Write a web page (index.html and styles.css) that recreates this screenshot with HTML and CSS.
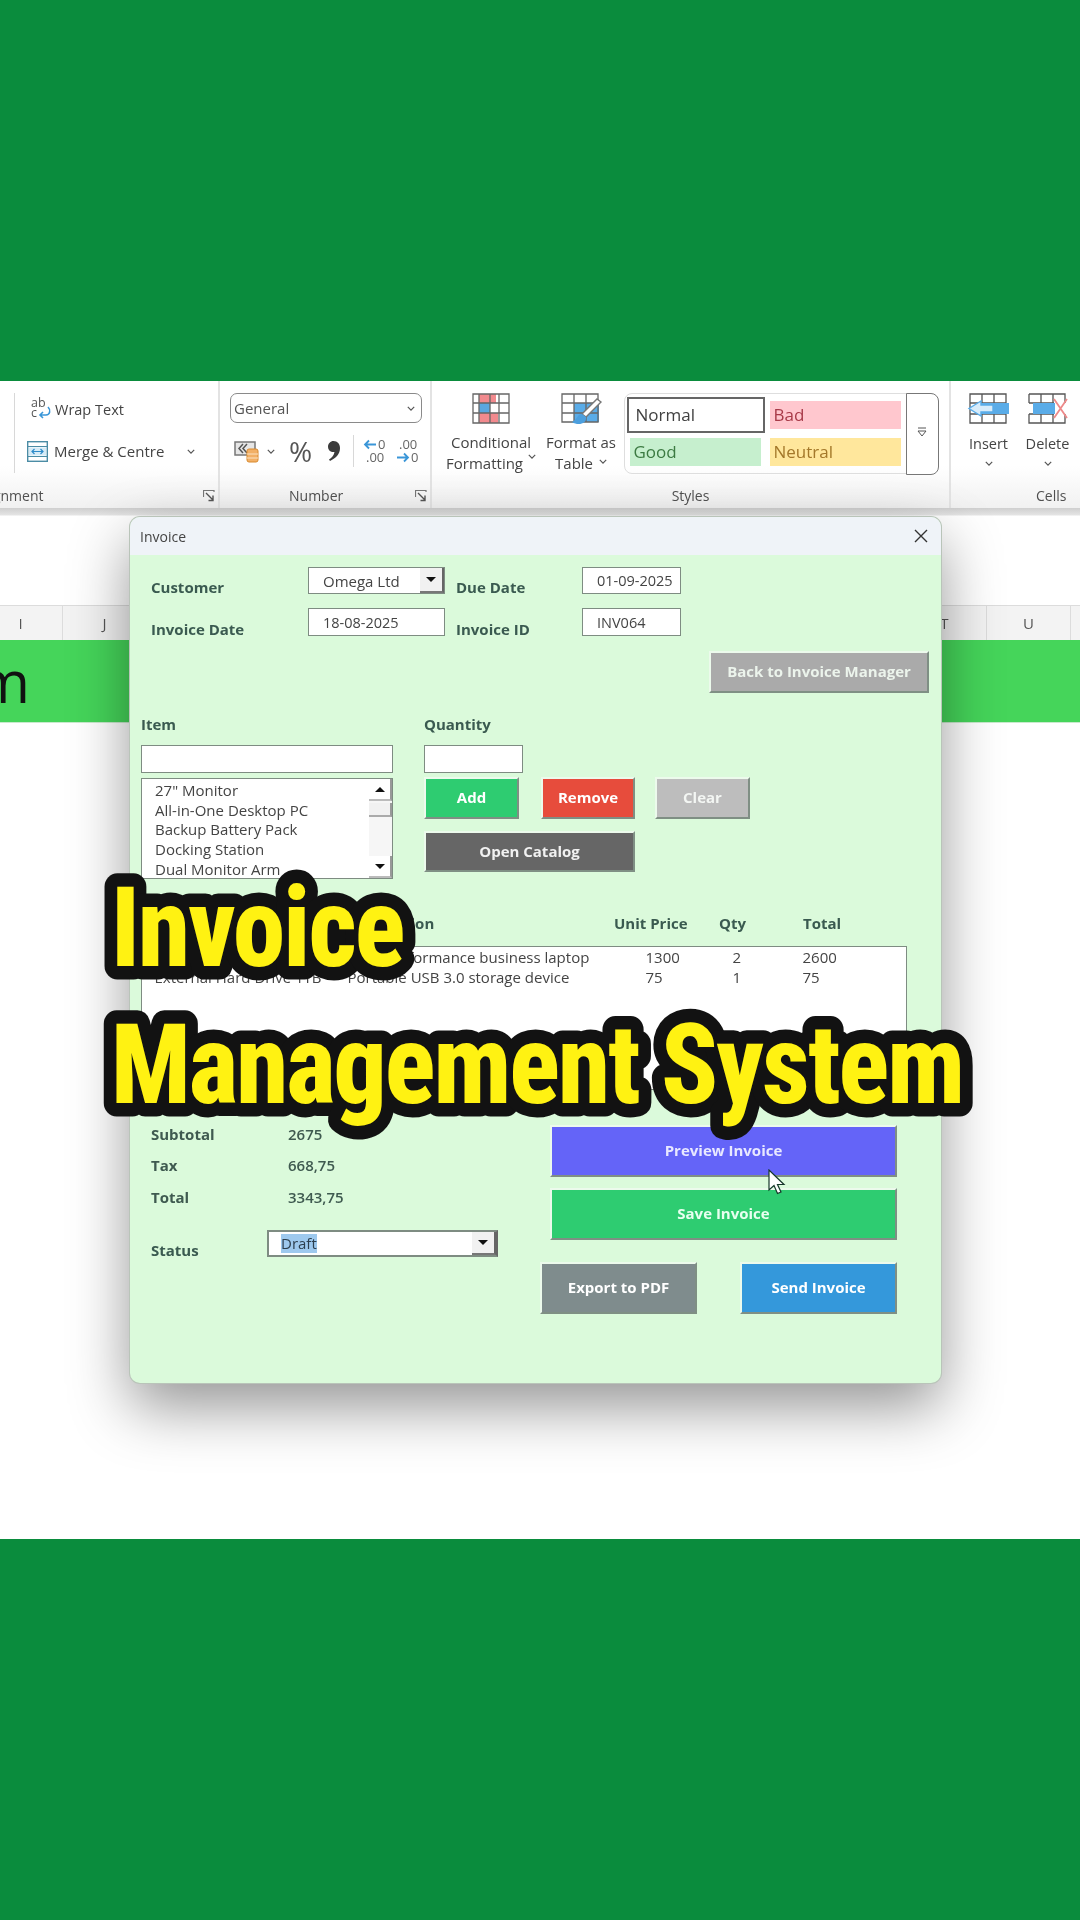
FILE: index.html
```html
<!DOCTYPE html>
<html lang="en">
<head>
<meta charset="utf-8">
<title>Invoice Management System</title>
<link rel="stylesheet" href="styles.css">
</head>
<body>
<svg class="defs" width="0" height="0" aria-hidden="true">
  <symbol id="chev" viewBox="0 0 10 6"><path d="M1 1l4 4 4-4" fill="none" stroke="currentColor" stroke-width="1.5"/></symbol>
  <symbol id="launch" viewBox="0 0 12 12"><path d="M.5 7V.5H11V2M.5.5" fill="none" stroke="#777" stroke-width="1.2"/><path d="M3 3l7 7M10 5.5V10.500H5.500" fill="none" stroke="#555" stroke-width="1.4"/></symbol>
</svg>
<div class="band"></div>
<main class="screen">
  <div class="shot">
    <section class="ribbon">
      <div class="group g-align">
        <div class="g-body align-body">
          <div class="tool-row">
            <svg class="ic-wrap" width="22" height="24" viewBox="0 0 22 24"><text x="1" y="10" class="ic-txt">ab</text><text x="1" y="20" class="ic-txt">c</text><path d="M18 10c3 3 2 8-2 8h-6M13 15l-3 3 3 3" fill="none" stroke="#3a96d8" stroke-width="1.6"/></svg>
            <span class="wrap-text">Wrap Text</span>
          </div>
          <div class="tool-row merge">
            <svg width="21" height="21" viewBox="0 0 21 21"><rect x=".7" y=".7" width="19.600" height="19.600" fill="#fff" stroke="#4b8ca5" stroke-width="1.400"/><path d="M1 5.500h19M1 15.500h19" stroke="#4b8ca5"/><rect x="2" y="6.500" width="17" height="8" fill="#d5ebf7"/><path d="M5 10.500h11M7.500 8l-2.500 2.500L7.500 13M13.500 8l2.500 2.500L13.500 13" fill="none" stroke="#2e8bc9" stroke-width="1.200"/></svg>
            <span>Merge &amp; Centre</span>
            <svg class="chev merge-chev"><use href="#chev"/></svg>
          </div>
        </div>
        <div class="g-label label-cut"><span>Alignment</span><svg class="launch"><use href="#launch"/></svg></div>
      </div>

      <div class="group g-number">
        <div class="g-body num-body">
          <div class="num-combo"><span>General</span><svg class="chev"><use href="#chev"/></svg></div>
          <div class="num-tools">
            <svg class="ic-acc" width="25" height="24" viewBox="0 0 25 24"><rect x="1" y="3" width="20" height="13" fill="#e6e6e6" stroke="#777" stroke-width="1.500"/><path d="M9 5l-4 4.500L9 14M13 5L9 9.500 13 14" fill="none" stroke="#555" stroke-width="1.500"/><rect x="13" y="10" width="11" height="13" rx="2" fill="#f2b066" stroke="#d98a2f"/><path d="M13 15h11M13 19h11" stroke="#fbe3c4"/></svg>
            <svg class="chev acc-chev"><use href="#chev"/></svg>
            <span class="pct">%</span>
            <svg class="comma" width="14" height="24" viewBox="0 0 14 24"><path d="M6.500 2C10.500 2 13 5 13 9c0 6-4 10-10 13l-1-1.500c3-2 5-4.500 5.500-7.500C4 13.500 1 11.500 1 7.500 1 4.500 3.500 2 6.500 2z" fill="#3c3c3c"/></svg>
            <i class="tool-sep"></i>
            <svg class="dec" width="23" height="28" viewBox="0 0 23 28"><path d="M13 7.500H2M6 3.500l-4 4 4 4" fill="none" stroke="#3a96d8" stroke-width="1.800"/><text x="15" y="12" class="dec-txt">0</text><text x="3" y="25" class="dec-txt">.00</text></svg>
            <svg class="dec" width="23" height="28" viewBox="0 0 23 28"><text x="3" y="12" class="dec-txt">.00</text><path d="M1 20.500h11M8 16.500l4 4-4 4" fill="none" stroke="#3a96d8" stroke-width="1.800"/><text x="15" y="25" class="dec-txt">0</text></svg>
          </div>
        </div>
        <div class="g-label label-center"><span>Number</span><svg class="launch"><use href="#launch"/></svg></div>
      </div>

      <div class="group g-styles">
        <div class="g-body styles-body">
          <div class="big-tool cf">
            <svg width="38" height="31" viewBox="0 0 38 31"><rect x="1" y="1" width="36" height="29" fill="#fff"/><rect x="7" y="1" width="17" height="9" fill="#f28a8e"/><rect x="7" y="10" width="11" height="10" fill="#5aa7e0"/><rect x="7" y="20" width="19" height="10" fill="#f28a8e"/><path d="M1 1h36v29H1zM1 10h36M1 20h36M7 1v29M18 1v29M27 1v29" fill="none" stroke="#666" stroke-width="1.300"/></svg>
            <span>Conditional</span>
            <span>Formatting <svg class="chev"><use href="#chev"/></svg></span>
          </div>
          <div class="big-tool ft">
            <svg width="42" height="36" viewBox="0 0 42 36"><rect x="13" y="10" width="25" height="19" fill="#5aace8"/><path d="M1 1h36v28H1zM1 10h36M1 20h36M13 1v28M25 1v28" fill="none" stroke="#666" stroke-width="1.300"/><path d="M40 9L25 24l-4-3L36 6z" fill="#fff" stroke="#777" stroke-width="1.400"/><path d="M21 21c-5 0-4 5-10 8 6 4 15 2 14-5z" fill="#4c9fde"/></svg>
            <span>Format as</span>
            <span>Table <svg class="chev"><use href="#chev"/></svg></span>
          </div>
          <div class="gallery">
            <div class="swatches">
              <div class="sw sw-normal">Normal</div>
              <div class="sw sw-bad">Bad</div>
              <div class="sw sw-good">Good</div>
              <div class="sw sw-neutral">Neutral</div>
            </div>
            <div class="gal-btn"><svg width="10" height="10" viewBox="0 0 10 10"><path d="M1 1h8M1 4h8l-4 5z" fill="#fff" stroke="#555"/></svg></div>
          </div>
        </div>
        <div class="g-label styles-label"><span>Styles</span></div>
      </div>

      <div class="group g-cells">
        <div class="g-body cells-body">
          <div class="cell-tool">
            <svg width="43" height="31" viewBox="0 0 43 31"><path d="M3 1h36v29H3zM3 10h36M3 21h36M15 1v29M27 1v29" fill="none" stroke="#555" stroke-width="1.300"/><rect x="13" y="10" width="29" height="11" fill="#5aace8"/><path d="M14 8L2 15.500 14 23v-4h12v-7H14z" fill="#d8ecfa" stroke="#5aace8" stroke-width="1.400"/></svg>
            <span>Insert</span>
            <svg class="chev"><use href="#chev"/></svg>
          </div>
          <div class="cell-tool">
            <svg width="40" height="31" viewBox="0 0 40 31"><path d="M1 1h36v9M1 1v9M1 21v9h36v-9M1 10h25M1 21h25M13 1v29M25 1v29" fill="none" stroke="#555" stroke-width="1.300"/><rect x="5" y="10" width="22" height="11" fill="#5aace8"/><path d="M26 6l13 19M39 6L26 25" stroke="#ee8a8a" stroke-width="1.800"/></svg>
            <span>Delete</span>
            <svg class="chev"><use href="#chev"/></svg>
          </div>
        </div>
        <div class="g-label cells-label"><span>Cells</span></div>
      </div>
    </section>

    <section class="sheet">
      <div class="formula-gap"></div>
      <div class="col-heads">
        <span>I</span><span>J</span><span>K</span><span>L</span><span>M</span><span>N</span><span>O</span><span>P</span><span>Q</span><span>R</span><span>S</span><span>T</span><span>U</span><span>V</span>
      </div>
      <div class="title-band"><span>m</span></div>
    </section>

    <section class="dialog">
      <header class="dlg-title">
        <span>Invoice</span>
        <svg width="14" height="14" viewBox="0 0 14 14"><path d="M1 1l12 12M13 1L1 13" stroke="#333" stroke-width="1.400"/></svg>
      </header>
      <div class="dlg-body">
        <div class="head-grid">
          <label class="lbl lbl-down">Customer</label>
          <div class="field combo"><span>Omega Ltd</span><b class="drop"><i></i></b></div>
          <label class="lbl lbl-down due">Due Date</label>
          <div class="field">01-09-2025</div>
          <label class="lbl lbl-down">Invoice Date</label>
          <div class="field">18-08-2025</div>
          <label class="lbl lbl-down due">Invoice ID</label>
          <div class="field">INV064</div>
        </div>

        <div class="back-row"><button class="btn btn-back">Back to Invoice Manager</button></div>

        <div class="entry">
          <div class="entry-left">
            <label class="lbl lbl-top">Item</label>
            <div class="field item-input"></div>
            <div class="listbox">
              <ul>
                <li>27" Monitor</li>
                <li>All-in-One Desktop PC</li>
                <li>Backup Battery Pack</li>
                <li>Docking Station</li>
                <li>Dual Monitor Arm</li>
              </ul>
              <div class="scroll">
                <b class="sb-btn"><i class="up"></i></b>
                <b class="sb-thumb"></b>
                <span class="sb-track"></span>
                <b class="sb-btn"><i></i></b>
              </div>
            </div>
          </div>
          <div class="entry-right">
            <label class="lbl lbl-top">Quantity</label>
            <div class="field qty-input"></div>
            <div class="btn-row">
              <button class="btn btn-add">Add</button>
              <button class="btn btn-remove">Remove</button>
              <button class="btn btn-clear">Clear</button>
            </div>
            <button class="btn btn-catalog">Open Catalog</button>
          </div>
        </div>

        <div class="table-head">
          <span>Item</span><span>Description</span><span>Unit Price</span><span>Qty</span><span>Total</span>
        </div>
        <div class="table-list">
          <div class="t-row"><span>Business Laptop</span><span>High-performance business laptop</span><span>1300</span><span>2</span><span>2600</span></div>
          <div class="t-row"><span>External Hard Drive 1TB</span><span>Portable USB 3.0 storage device</span><span>75</span><span>1</span><span>75</span></div>
        </div>

        <div class="bottom">
          <div class="summary">
            <div class="sum-grid">
              <span>Subtotal</span><span>2675</span>
              <span>Tax</span><span>668,75</span>
              <span>Total</span><span>3343,75</span>
            </div>
            <div class="status-row">
              <label class="lbl status-lbl">Status</label>
              <div class="field combo status-combo"><span class="sel">Draft</span><b class="drop"><i></i></b></div>
            </div>
          </div>
          <div class="actions">
            <button class="btn btn-wide btn-preview">Preview Invoice</button>
            <button class="btn btn-wide btn-save">Save Invoice</button>
            <div class="act-row">
              <button class="btn btn-half btn-export">Export to PDF</button>
              <button class="btn btn-half btn-send">Send Invoice</button>
            </div>
          </div>
        </div>
      </div>
    </section>

    <svg class="cursor" width="18" height="27" viewBox="0 0 18 27"><path d="M1 1v20l5-4.500 3.500 8 3.500-1.500-3.500-7.500H16z" fill="#fff" stroke="#16382a" stroke-width="1.200"/></svg>
  </div>

  <svg class="caption" width="1080" height="340" viewBox="0 0 1080 340" role="img">
    <g transform="translate(111 0) scale(.947 1)">
      <text x="0" y="125">Invoice</text>
      <text x="0" y="262">Management System</text>
    </g>
  </svg>
</main>
<div class="band band-bottom"></div>
</body>
</html>
```
FILE: styles.css
```css
* { box-sizing: border-box; }
html, body { margin: 0; padding: 0; }
body {
  width: 1080px;
  height: 1920px;
  overflow: hidden;
  display: flex;
  flex-direction: column;
  background: #0a8c3d;
  font-family: "Open Sans", "Noto Sans", sans-serif;
}
.defs { position: absolute; }
.band { height: 381px; background: #0a8c3d; flex: none; }
.band-bottom { height: 381px; }
.screen { position: relative; height: 1158px; flex: none; background: #fff; overflow: hidden; }
.shot { position: relative; height: 100%; filter: blur(.45px); overflow: hidden; }

/* ribbon */
.ribbon {
  height: 127px;
  display: flex;
  color: #444;
  font-size: 15px;
  background: linear-gradient(#fff 0, #fff 85px, #f1f1f1 127px);
}
.group { display: flex; flex-direction: column; padding-top: 12px; flex: none; position: relative; }
.g-body { height: 93px; flex: none; }
.g-label { height: 20px; line-height: 20px; font-size: 14px; display: flex; align-items: center; color: #505050; white-space: nowrap; }
.chev { width: 8px; height: 5px; color: #555; flex: none; }
.launch { width: 12px; height: 12px; flex: none; }
.ic-txt { font: 12.5px "Open Sans", sans-serif; fill: #555; }

.g-align { width: 220px; border-right: 2px solid #e3e3e3; }
.align-body { margin-left: 14px; padding-left: 12px; border-left: 1px solid #d8d8d8; height: 80px; display: flex; flex-direction: column; gap: 19px; }
.tool-row { display: flex; align-items: center; gap: 3px; height: 28px; white-space: nowrap; margin-top: 2px; }
.wrap-text { font-size: 14.5px; }
.ic-wrap { margin-left: 3px; }
.merge { gap: 6px; margin-top: -5px; }
.merge-chev { margin-left: 17px; }
.label-cut { margin: 13px 3px 0 -23px; justify-content: space-between; }

.g-number { width: 212px; border-right: 2px solid #e3e3e3; }
.num-body { padding: 0 0 0 10px; }
.num-combo {
  width: 192px; height: 30px; border: 1.5px solid #8a8a8a; border-radius: 7px; padding: 0 6px 0 3px;
  display: flex; align-items: center; justify-content: space-between; font-size: 15px; color: #555; background: #fff;
}
.num-tools { display: flex; align-items: center; margin-top: 10px; height: 36px; padding-left: 4px; }
.acc-chev { margin-left: 8px; }
.pct { font-size: 28px; margin-left: 14px; color: #555; line-height: 1; font-weight: 400; }
.comma { margin-left: 15px; }
.tool-sep { width: 1px; height: 32px; background: #d8d8d8; margin: 0 9px 0 12px; }
.dec + .dec { margin-left: 10px; }
.dec-txt { font: 13px "Open Sans", sans-serif; fill: #666; }
.label-center { padding: 0 3px 0 69px; justify-content: space-between; }

.g-styles { width: 519px; border-right: 2px solid #e3e3e3; }
.styles-body { display: flex; }
.big-tool { display: flex; flex-direction: column; align-items: center; line-height: 21px; font-size: 15px; white-space: nowrap; flex: none; }
.big-tool svg:first-child { margin-bottom: 8px; flex: none; }
.big-tool .chev { margin-left: 1px; vertical-align: 2px; }
.cf { width: 118px; }
.ft { width: 74px; margin-left: -6px; }
.ft svg:first-child { margin-bottom: 3px; margin-left: 2px; }
.gallery { width: 314px; height: 81px; margin-left: 6px; border: 1.5px solid #dedede; border-radius: 8px; display: flex; flex: none; }
.swatches { width: 282px; display: grid; grid-template-columns: 138px 131px; grid-template-rows: 36px 28px; column-gap: 5px; row-gap: 5px; padding: 2.500px 0 0 1.500px; font-size: 17px; }
.sw { display: flex; align-items: center; padding-left: 4px; }
.sw-normal { border: 2px solid #666; padding-left: 7px; color: #404040; background: #fff; }
.sw-bad { background: #ffc7ce; color: #a83a48; height: 28px; align-self: center; }
.sw-good { background: #c6efce; color: #3c7a42; width: 131px; margin-left: 3px; }
.sw-neutral { background: #ffe79c; color: #a4782a; }
.gal-btn { flex: 1; border: 1.5px solid #777; border-radius: 0 8px 8px 0; margin: -1.500px; display: flex; align-items: center; justify-content: center; padding-bottom: 4px; background: #fff; }
.styles-label { justify-content: center; }

.g-cells { flex: 1; }
.cells-body { display: flex; padding-left: 8px; }
.cell-tool { width: 59px; display: flex; flex-direction: column; align-items: center; font-size: 14.5px; line-height: 20px; flex: none; }
.cell-tool svg:first-child { margin-bottom: 10px; }
.cell-tool .chev { margin-top: 7px; }
.cells-label { padding-left: 85px; }

/* sheet */
.sheet { background: linear-gradient(#cfcfcf 0, #e4e4e4 7px, #fff 8px); height: 1031px; }
.formula-gap { height: 97px; }
.col-heads { height: 35px; display: flex; margin-left: -21px; background: #f3f3f3; border-top: 1px solid #dcdcdc; }
.col-heads span { width: 84px; flex: none; border-right: 1px solid #dcdcdc; text-align: center; line-height: 34px; font-size: 15px; color: #555; }
.title-band { height: 83px; background: #45d55a; border-bottom: 1px solid #c9e9cd; overflow: hidden; }
.title-band span { display: block; font-size: 58px; line-height: 81px; color: #111; margin-left: -30px; width: 60px; text-align: right; }

/* dialog */
.dialog {
  position: absolute; left: 130px; top: 136px; width: 811px; height: 866px;
  background: #dbfadb; border-radius: 10px; overflow: hidden;
  box-shadow: 0 0 0 1px #b9c4b9, 0 24px 60px rgba(0,0,0,.42);
  color: #3d4f47;
}
.dlg-title { height: 38px; background: #eff3f8; display: flex; align-items: center; justify-content: space-between; padding: 0 13px 0 10px; font-size: 14px; color: #444; }
.dlg-body { padding: 12px 0 0 11px; }
.lbl { font-weight: 700; font-size: 15px; color: #3a5a50; white-space: nowrap; }
.lbl-down { align-self: center; margin-top: 13px; }
.field { height: 28px; background: #fff; border: 1.5px solid #7e8c82; font-size: 14.5px; color: #444; display: flex; align-items: center; padding-left: 14px; white-space: nowrap; }
.head-grid { margin-left: 10px; display: grid; grid-template-columns: 157px 137px 137px 99px; grid-template-rows: 27px 28px; row-gap: 14px; }
.head-grid .field { height: auto; }
.due { margin-left: 11px; }
.field.combo { padding-right: 0; justify-content: space-between; font-size: 15px; }
.drop { width: 24px; align-self: stretch; background: #f1f1f1; border-bottom: 2px solid #777; border-right: 2px solid #666; display: flex; align-items: center; justify-content: center; flex: none; }
.drop i, .sb-btn i { display: block; width: 0; height: 0; border: 5px solid transparent; border-top: 5px solid #111; border-bottom: 0; }
.sb-btn i.up { border-top: 0; border-bottom: 5px solid #111; }

.btn { display: block; padding: 0 0 2px; margin: 0; color: #fff; font: 700 15px "Open Sans", sans-serif; border-top: 2px solid #ecfaec; border-left: 2px solid #ecfaec; border-right: 2px solid #7f8f84; border-bottom: 2.5px solid #7f8f84; white-space: nowrap; }
.back-row { display: flex; justify-content: flex-end; margin: 15px 12px 0 0; }
.btn-back { width: 220px; height: 42px; background: #aaa; color: #ecf4ec; }

.entry { display: grid; grid-template-columns: 252px 1fr; column-gap: 31px; margin-top: 21px; }
.lbl-top { display: block; height: 31px; line-height: 20px; }
.entry-left, .entry-right { min-width: 0; }
.item-input { width: 252px; }
.listbox { margin-top: 5px; height: 101px; background: #fff; border: 1.5px solid #7e8c82; display: flex; overflow: hidden; }
.listbox ul { list-style: none; margin: 0; padding: 2px 0 0 13px; flex: 1; font-size: 15px; line-height: 19.700px; color: #444; white-space: nowrap; }
.scroll { width: 23px; background: #f6f6f6; display: flex; flex-direction: column; flex: none; }
.sb-btn { height: 22px; background: #fff; display: flex; align-items: center; justify-content: center; border-bottom: 2px solid #bbb; border-right: 2px solid #999; flex: none; }
.sb-thumb { height: 14px; margin-top: 2px; background: #f1f1f1; border-bottom: 2px solid #aaa; border-right: 2px solid #999; flex: none; }
.sb-track { flex: 1; }
.qty-input { width: 99px; }
.btn-row { display: flex; margin-top: 4px; }
.btn-row .btn { height: 42px; }
.btn-add { width: 95px; background: #2ecc71; }
.btn-remove { width: 94px; margin-left: 22px; background: #e74c3c; }
.btn-clear { width: 95px; margin-left: 20px; background: #bdbdbd; color: #f3f6f3; }
.btn-catalog { margin-top: 12px; width: 211px; height: 41px; background: #666; color: #f1f1f1; }

.table-head, .t-row { display: grid; white-space: nowrap; }
.table-head { margin-top: 34px; padding-left: 14px; height: 20px; line-height: 20px; font-weight: 700; font-size: 15px; color: #3a5a50; grid-template-columns: 193px 266px 105px 84px 1fr; }
.table-list { margin-top: 13px; width: 766px; height: 144px; background: #fff; border: 1.5px solid #7e8c82; padding: 0 0 0 12.500px; font-size: 15px; line-height: 20px; color: #444; }
.t-row { grid-template-columns: 193px 298px 87px 70px 1fr; }

.bottom { display: flex; margin-top: 28px; }
.summary { width: 399px; padding-left: 10px; flex: none; }
.sum-grid { display: grid; grid-template-columns: 137px 1fr; grid-auto-rows: 31.500px; align-items: center; font-weight: 700; font-size: 15px; color: #3f5a50; }
.sum-grid span:nth-child(even) { font-weight: 600; }
.status-row { display: flex; margin-top: 17px; }
.status-lbl { width: 116px; margin-top: 10px; flex: none; }
.status-combo { width: 231px; height: 27px; border: 2px solid #7e8c82; border-right-color: #666; padding-left: 12px; }
.sel { background: #9ec9ee; color: #2d3f4e; line-height: 19px; }
.actions { width: 357px; flex: none; margin-top: 7px; }
.btn-wide { margin-left: 10px; width: 347px; height: 52px; }
.btn-save { margin-top: 11px; background: #2ecc71; color: #e8fff0; }
.btn-preview { background: #6464f8; color: #e8e8ff; }
.act-row { display: flex; justify-content: space-between; margin-top: 22px; }
.btn-half { width: 157px; height: 52px; }
.btn-export { background: #7f8c8d; }
.btn-send { background: #3498db; }

.cursor { position: absolute; left: 768px; top: 788px; }

/* caption */
.caption { position: absolute; left: 0; top: 460px; overflow: visible; }
.caption text {
  font-family: "Roboto", sans-serif;
  font-weight: 800;
  font-stretch: 75%;
  font-size: 111px;
  letter-spacing: -2px;
  fill: #fff212;
  stroke: #121212;
  stroke-width: 27px;
  stroke-linejoin: round;
  paint-order: stroke fill;
}
```
